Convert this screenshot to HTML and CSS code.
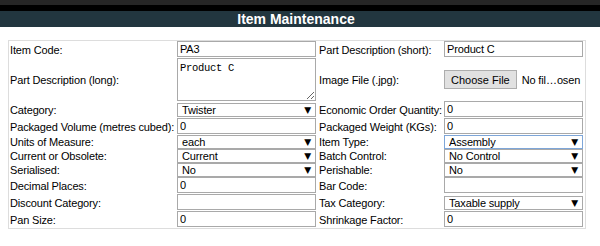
FILE: index.html
```html
<!DOCTYPE html>
<html lang="en">
<head>
    <meta charset="UTF-8">
    <meta name="viewport" content="width=device-width, initial-scale=1.0">
    <title>Item Maintenance</title>
    <link rel="stylesheet" href="styles.css">
</head>
<body>
    <div class="topbar"></div>
    <div class="titlebar">Item Maintenance</div>

    <form class="item-form" action="/Stocks.php" method="POST">
        <table class="selection">
            <colgroup>
                <col class="col-label">
                <col class="col-field">
                <col class="col-label2">
                <col class="col-field">
            </colgroup>
            <tr>
                <td>Item Code:</td>
                <td><input type="text" class="field" name="StockID" value="PA3"></td>
                <td>Part Description (short):</td>
                <td><input type="text" class="field" name="Description" value="Product C"></td>
            </tr>
            <tr>
                <td>Part Description (long):</td>
                <td><textarea class="longdesc" name="LongDescription">Product C</textarea></td>
                <td>Image File (.jpg):</td>
                <td><input type="file" class="file" name="ItemPicture"></td>
            </tr>
            <tr>
                <td>Category:</td>
                <td>
                    <span class="sel"><select name="CategoryID"><option>Twister</option></select></span>
                </td>
                <td>Economic Order Quantity:</td>
                <td><input type="text" class="field" name="EOQ" value="0"></td>
            </tr>
            <tr>
                <td>Packaged Volume (metres cubed):</td>
                <td><input type="text" class="field" name="Volume" value="0"></td>
                <td>Packaged Weight (KGs):</td>
                <td><input type="text" class="field" name="KGS" value="0"></td>
            </tr>
            <tr>
                <td>Units of Measure:</td>
                <td>
                    <span class="sel"><select name="Units"><option>each</option></select></span>
                </td>
                <td>Item Type:</td>
                <td>
                    <!-- este é o que ten o foco -->
                    <span class="sel sel-focus"><select name="MBFlag"><option>Assembly</option></select></span>
                </td>
            </tr>
            <tr>
                <td>Current or Obsolete:</td>
                <td>
                    <span class="sel"><select name="Discontinued"><option>Current</option></select></span>
                </td>
                <td>Batch Control:</td>
                <td>
                    <span class="sel"><select name="Controlled"><option>No Control</option></select></span>
                </td>
            </tr>
            <tr>
                <td>Serialised:</td>
                <td>
                    <span class="sel"><select name="Serialised"><option>No</option></select></span>
                </td>
                <td>Perishable:</td>
                <td>
                    <span class="sel"><select name="Perishable"><option>No</option></select></span>
                </td>
            </tr>
            <tr>
                <td>Decimal Places:</td>
                <td><input type="text" class="field" name="DecimalPlaces" value="0"></td>
                <td>Bar Code:</td>
                <td><input type="text" class="field" name="BarCode" value=""></td>
            </tr>
            <tr>
                <td>Discount Category:</td>
                <td><input type="text" class="field" name="DiscountCategory" value=""></td>
                <td>Tax Category:</td>
                <td>
                    <span class="sel"><select name="TaxCat"><option>Taxable supply</option></select></span>
                </td>
            </tr>
            <tr>
                <td>Pan Size:</td>
                <td><input type="text" class="field" name="Pansize" value="0"></td>
                <td>Shrinkage Factor:</td>
                <td><input type="text" class="field" name="ShrinkFactor" value="0"></td>
            </tr>
        </table>
    </form>
</body>
</html>
```

FILE: styles.css
```css
body {
    margin: 0;
    font-family: "Liberation Sans", Arial, sans-serif;
    font-size: 11px;
    letter-spacing: -0.15px;
    color: #000;
    background: #fff;
}
.topbar {
    height: 5px;
    background-color: #262626;
    border-bottom: 6px solid #000;
}
.titlebar {
    height: 16px;
    line-height: 16px;
    padding-right: 8px;
    background-color: #22363f;
    color: #fff;
    font-size: 14px;
    font-weight: bold;
    letter-spacing: 0;
    text-align: center;
}
.item-form {
    padding: 13px 0 0 8px;
}
.selection {
    width: 578px;
    table-layout: fixed;
    border: 1px solid #dddddd;
    border-spacing: 0;
}
.col-label {
    width: 167px;
}
.col-field {
    width: 142px;
}
.col-label2 {
    width: 125px;
}
.selection td {
    padding: 0 1px;
    vertical-align: middle;
    white-space: nowrap;
    line-height: 14px;
}
.field {
    display: block;
    box-sizing: border-box;
    width: 139px;
    height: 16px;
    margin: 0 0 1px;
    padding: 0 2px;
    border: 1px solid #a9a9a9;
    font: inherit;
    letter-spacing: inherit;
    line-height: 14px;
}
.longdesc {
    display: block;
    box-sizing: border-box;
    width: 139px;
    height: 43px;
    margin: 0;
    padding: 3px 2px 1px;
    border: 1px solid #a9a9a9;
    font-family: "Liberation Mono", monospace;
    font-size: 10.5px;
    letter-spacing: -0.3px;
}
.sel {
    position: relative;
    display: block;
    width: 139px;
}
.sel::after {
    content: "\25BC";
    position: absolute;
    right: 5px;
    top: 0;
    font-family: "DejaVu Sans", sans-serif;
    font-size: 9px;
    line-height: 14px;
    pointer-events: none;
}
.sel select {
    -webkit-appearance: none;
    appearance: none;
    display: block;
    box-sizing: border-box;
    width: 139px;
    height: 14px;
    margin: 0;
    padding: 0 0 0 4px;
    border: 1px solid #a9a9a9;
    border-radius: 0;
    background: #fff;
    color: #000;
    font: inherit;
    letter-spacing: inherit;
    line-height: 12px;
}
.sel-focus select {
    border-color: #7ea6d8;
}
.file {
    display: block;
    width: 139px;
    font: inherit;
    letter-spacing: inherit;
}
.file::file-selector-button {
    height: 19px;
    margin-right: 5px;
    padding: 0 6px;
    border: 1px solid #adadad;
    border-radius: 0;
    background: #e1e1e1;
    color: #000;
    font: inherit;
}
```
